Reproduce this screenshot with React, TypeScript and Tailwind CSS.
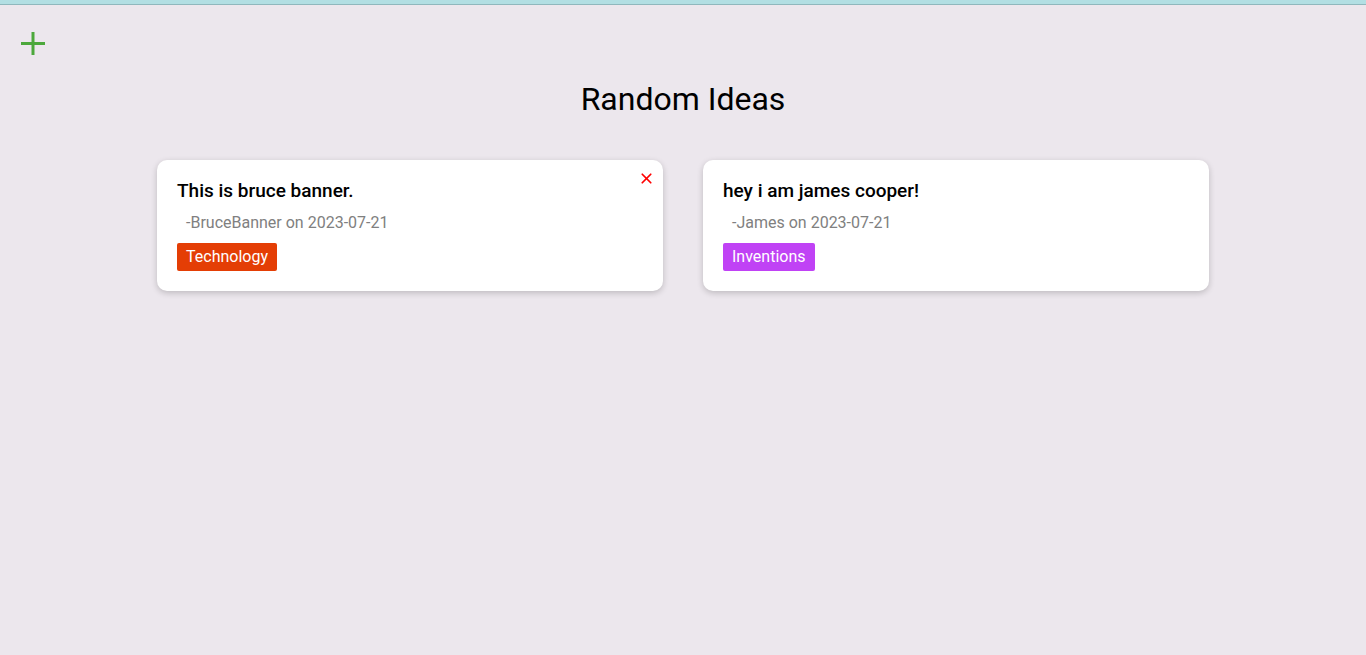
import { X } from "lucide-react";

type Idea = {
  text: string;
  username: string;
  date: string;
  tag: string;
  tagClass: string;
  canDelete: boolean;
};

const ideas: Idea[] = [
  {
    text: "This is bruce banner.",
    username: "BruceBanner",
    date: "2023-07-21",
    tag: "Technology",
    tagClass: "bg-[#e43e05]",
    canDelete: true,
  },
  {
    text: "hey i am james cooper!",
    username: "James",
    date: "2023-07-21",
    tag: "Inventions",
    tagClass: "bg-[#c042f5]",
    canDelete: false,
  },
];

const IdeaCard = ({ idea }: { idea: Idea }) => {
  return (
    <div className="relative bg-white rounded-[10px] shadow-[0_2px_6px_rgba(0,0,0,0.2)] px-5 pt-[20px] pb-[20px]">
      {idea.canDelete && (
        <button className="absolute top-[8px] right-[6px] text-[#ff0000] p-0.5">
          <X size={17} strokeWidth={2.4} />
        </button>
      )}
      <h3 className="text-[19px] leading-[22px] font-medium text-black">{idea.text}</h3>
      <p className="text-[16px] leading-5 text-[#808080] mt-[11px] ml-[9px]">
        -{idea.username} on {idea.date}
      </p>
      <span
        className={`inline-block mt-[10px] ${idea.tagClass} text-white text-[16px] leading-7 px-[9px] rounded-[2px]`}
      >
        {idea.tag}
      </span>
    </div>
  );
};

export default function App() {
  return (
    <div className="min-h-screen bg-[#ece7ed] font-['Roboto',sans-serif]">
      <div className="h-[5px] bg-[#b2dfe3] border-b border-[#8fb8bd]" />
      <div className="px-[20px] pt-[26px]">
        <button className="text-[#4ca83c] block">
          <svg width="26" height="26" viewBox="0 0 26 26" fill="none" stroke="currentColor" strokeWidth="3">
            <line x1="1" y1="12.5" x2="25" y2="12.5" />
            <line x1="13" y1="1" x2="13" y2="24" />
          </svg>
        </button>
      </div>
      <h1 className="text-center text-[32px] leading-[38px] font-normal text-black mt-[23px]">Random Ideas</h1>
      <div className="grid grid-cols-2 gap-10 w-[1052px] mx-auto mt-[42px]">
        {ideas.map((idea) => (
          <IdeaCard key={idea.text} idea={idea} />
        ))}
      </div>
    </div>
  );
}
